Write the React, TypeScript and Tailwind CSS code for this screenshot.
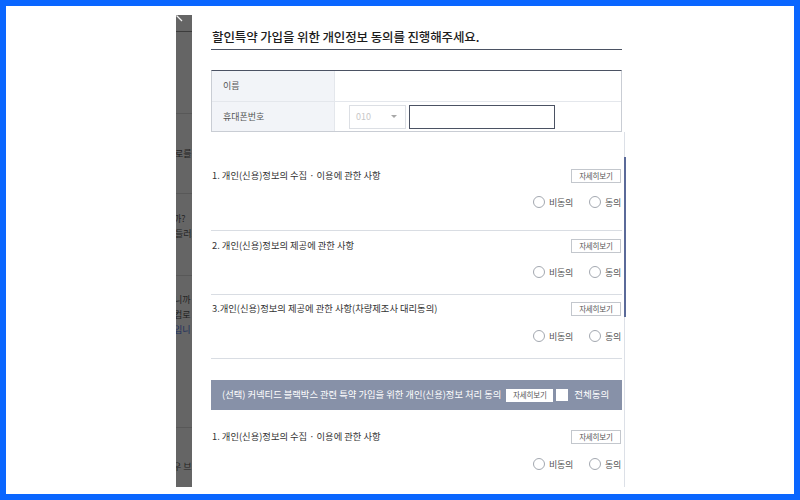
import React from 'react';

function DetailButton({ small }: { small?: boolean }) {
  return (
    <button
      className={
        small
          ? 'ml-[5px] flex h-[13px] w-[47px] items-center justify-center bg-white text-[7.5px] leading-none tracking-[-0.02em] text-[#555]'
          : 'flex h-[14px] w-[50px] items-center justify-center border border-[#c3c7cd] bg-white text-[7.5px] leading-none tracking-[-0.02em] text-[#555]'
      }
    >
      자세히보기
    </button>
  );
}

function Radio({ label }: { label: string }) {
  return (
    <label className="flex items-center gap-[4px]">
      <span className="h-[12px] w-[12px] rounded-full border border-[#a3a8b0] bg-white" />
      <span className="text-[9px] leading-none tracking-[-0.03em] text-[#555]">{label}</span>
    </label>
  );
}

function Section({ title, wrap, gap }: { title: string; wrap: string; gap: string }) {
  return (
    <div className={wrap}>
      <div className="flex h-[16px] items-center justify-between pr-[1px]">
        <span className="pl-[1px] text-[9.3px] leading-none text-[#333]">{title}</span>
        <DetailButton />
      </div>
      <div className={`flex h-[14px] items-center justify-end gap-[16px] pr-[1px] ${gap}`}>
        <Radio label="비동의" />
        <Radio label="동의" />
      </div>
    </div>
  );
}

// page behind the dimmed overlay, only a sliver of it shows
function BackdropStrip() {
  return (
    <div className="mt-[9px] flex h-[472px] w-[16px] shrink-0 flex-col overflow-hidden bg-[#656565] text-[9px] leading-[15px] text-[#232323]">
      <div className="h-[17px] shrink-0 border-b border-[#3c3c3c]">
        <svg width="16" height="16" viewBox="0 0 16 16">
          <line x1="0.5" y1="0.5" x2="6" y2="6" stroke="#f2f2f2" strokeWidth="1.3" />
        </svg>
      </div>
      <div className="h-[82px] shrink-0 border-b border-[#585858]" />
      <div className="flex h-[80px] shrink-0 flex-col justify-center whitespace-nowrap border-b border-[#585858]">
        <span className="-ml-[1px]">로를</span>
      </div>
      <div className="flex h-[82px] shrink-0 flex-col whitespace-nowrap border-b border-[#585858] pt-[17px]">
        <span className="-ml-[3px]">까?</span>
        <span className="-ml-[1px]">들러스</span>
      </div>
      <div className="flex h-[152px] shrink-0 flex-col whitespace-nowrap border-b border-[#585858] pt-[16px]">
        <span className="-ml-[2px]">니까</span>
        <span className="-ml-[2px]">컴로</span>
        <span className="-ml-[2px] text-[#1d2f5c]">입니</span>
      </div>
      <div className="flex flex-1 flex-col whitespace-nowrap pt-[31px]">
        <span className="-ml-[3px]">우 브</span>
      </div>
    </div>
  );
}

export default function App() {
  return (
    <div className="flex h-[500px] w-[800px] overflow-hidden border-[6px] border-[#0a66ff] bg-white font-['Noto_Sans_CJK_KR',sans-serif]">
      <div className="w-[170px] shrink-0" />
      <BackdropStrip />
      <div className="w-[19px] shrink-0" />
      <div className="flex w-[415px] shrink-0 flex-col">
        {/* title */}
        <div className="w-[411px] border-b border-[#4b5263] pb-[4px] pt-[23px]">
          <h1 className="pl-[1px] text-[12.5px] font-medium leading-[16px] tracking-[-0.01em] text-[#1c1c1c]">
            할인특약 가입을 위한 개인정보 동의를 진행해주세요.
          </h1>
        </div>

        {/* name / phone table */}
        <div className="mt-[20px] w-[411px] border-x border-b border-t border-x-[#c9cdd4] border-b-[#c9cdd4] border-t-[#4b5263]">
          <div className="flex h-[31px] border-b border-[#e4e7ec]">
            <div className="flex w-[123px] items-center border-r border-[#e4e7ec] bg-[#f2f4f8] pl-[11px] text-[9px] text-[#555]">
              이름
            </div>
            <div className="flex-1" />
          </div>
          <div className="flex h-[29px]">
            <div className="flex w-[123px] items-center border-r border-[#e4e7ec] bg-[#f2f4f8] pl-[11px] text-[9px] text-[#555]">
              휴대폰번호
            </div>
            <div className="flex flex-1 items-center pl-[14px]">
              <div className="flex h-[24px] w-[57px] items-center justify-between border border-[#dcdfe4] pl-[6px] pr-[8px]">
                <span className="text-[9px] text-[#c8c8c8]">010</span>
                <span className="border-x-[3px] border-t-[3px] border-x-transparent border-t-[#a8a8a8]" />
              </div>
              <input className="ml-[3px] h-[24px] w-[146px] border border-[#4b5263] bg-white outline-none" />
            </div>
          </div>
        </div>

        {/* scrolling agreement list */}
        <div className="flex h-[355px]">
          <div className="w-[411px] overflow-hidden">
            <Section
              title="1. 개인(신용)정보의 수집 · 이용에 관한 사항"
              wrap="border-b border-[#d9dde3] pb-[21px] pt-[36px]"
              gap="mt-[11px]"
            />
            <Section
              title="2. 개인(신용)정보의 제공에 관한 사항"
              wrap="border-b border-[#d9dde3] pb-[15px] pt-[7px]"
              gap="mt-[11px]"
            />
            <Section
              title="3.개인(신용)정보의 제공에 관한 사항(차량제조사 대리동의)"
              wrap="border-b border-[#d9dde3] pb-[15px] pt-[6px]"
              gap="mt-[12px]"
            />

            <div className="mt-[21px] flex h-[30px] items-center bg-[#8791a8] pl-[11px] text-white">
              <span className="text-[9.3px] leading-none">
                (선택) 커넥티드 블랙박스 관련 특약 가입을 위한 개인(신용)정보 처리 동의
              </span>
              <DetailButton small />
              <span className="ml-[3px] h-[12px] w-[12px] bg-white" />
              <span className="ml-[6px] text-[9.5px] leading-none">전체동의</span>
            </div>

            <Section
              title="1. 개인(신용)정보의 수집 · 이용에 관한 사항"
              wrap="pb-[15px] pt-[19px]"
              gap="mt-[12px]"
            />
          </div>
          <div className="ml-[2px] flex w-[2px] flex-col">
            <div className="h-[25px] border-l border-[#dce0e7]" />
            <div className="h-[160px] bg-[#5b6a99]" />
            <div className="flex-1 border-l border-[#dce0e7]" />
          </div>
        </div>
      </div>
    </div>
  );
}
